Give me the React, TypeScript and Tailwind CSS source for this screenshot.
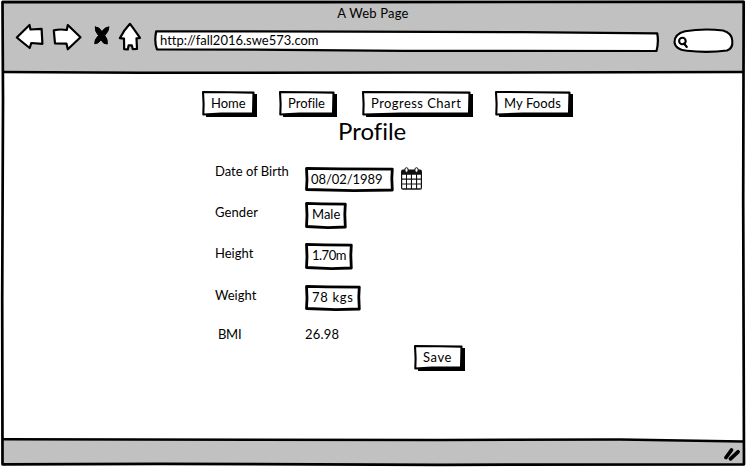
import type { ReactNode } from "react";

type BoxProps = { children: ReactNode; width: number; height: number; className: string; raised?: boolean };

function SketchBox({ children, width: w, height: h, className, raised }: BoxProps) {
  return (
    <div className={`relative shrink-0 whitespace-nowrap ${className}`}>
      <svg className="absolute inset-0 overflow-visible" width={w} height={h} aria-hidden="true">
        {raised ? (
          <>
            <path d={`M4 3H${w}V${h}H4Z`} fill="#000" />
            <path
              d={`M1 1 L${w * 0.5} 1.2 L${w - 3.5} 1.6 L${w - 4} ${h - 3.5} L${w * 0.35} ${h - 3.5} L1.3 ${h - 2.5} L1.6 ${h * 0.5} Z`}
              fill="#fff"
              stroke="#000"
              strokeWidth="2.1"
              strokeLinejoin="round"
            />
          </>
        ) : (
          <path
            d={`M1.5 1.3 L${w * 0.4} 1.8 L${w - 1.7} 2.2 L${w - 2.2} ${h * 0.45} L${w - 1.7} ${h - 2} L${w * 0.55} ${h - 1.4} L1.5 ${h - 2.5} L2 ${h * 0.5} Z`}
            fill="#fff"
            stroke="#000"
            strokeWidth="2.8"
            strokeLinejoin="round"
          />
        )}
      </svg>
      <span className="relative">{children}</span>
    </div>
  );
}

function NavIcons() {
  return (
    <svg
      className="shrink-0"
      width="128"
      height="30"
      viewBox="15 22 128 30"
      fill="#fff"
      stroke="#000"
      strokeWidth="2.2"
      strokeLinejoin="round"
      strokeLinecap="round"
      aria-hidden="true"
    >
      <path d="M16.8 37.5 L29.5 25 L30.5 29.5 L41.6 28.8 L42.4 43.8 L31.3 43 L29.7 48 Q24 43.5 16.8 37.5Z" />
      <path d="M53.8 30.4 Q60 28.8 66.8 30 L67.8 25 L80.5 37.3 L67.8 49.3 L66.5 43.7 L55 43.3 Z" />
      <path
        d="M95.3 27 Q99 26.5 101.9 31.5 Q104.5 27.3 109 26.8 Q109 31 104.8 35.5 Q108 39.5 107.3 44 Q103.3 44.5 101 39.8 Q98.5 43.8 94.8 43.8 Q94 40 98.5 35.5 Q94.5 31 95.3 27Z"
        fill="#000"
        strokeWidth="1"
      />
      <path d="M130 23.8 Q134 29 140 37.8 L136.5 38.4 L137 49 L132.8 49.2 L131.8 45.3 L128.6 45.4 L127.8 49.5 L124.2 49.2 L124 38.7 L119.8 38.2 Q124 30 130 23.8Z" />
    </svg>
  );
}

function BrowserHeader() {
  return (
    <header className="mx-[2px] h-[73px] shrink-0 bg-[#c1c1c1]">
      <h1 className="h-[22px] pt-[5px] text-center text-[13px] leading-4 tracking-[0.2px]">A Web Page</h1>
      <div className="flex items-start pl-[13px]">
        <NavIcons />
        <div className="relative mt-[8px] ml-[10px] h-[22px] w-[508px] shrink-0 pt-[2px] pl-[7px] text-[13px] leading-4">
          <svg className="absolute inset-0 overflow-visible" width="508" height="22" aria-hidden="true">
            <path
              d="M3.2 1.3 L200 1.6 L370 2.2 L504.2 3.3 Q505.9 12 503.5 21 L250 20.8 L130 19.8 L4 19.3 Q1 12 3.2 1.3Z"
              fill="#fff"
              stroke="#000"
              strokeWidth="2.2"
              strokeLinejoin="round"
            />
          </svg>
          <span className="relative">http://fall2016.swe573.com</span>
        </div>
        <svg
          className="mt-[5px] ml-[12px] shrink-0"
          width="62"
          height="28"
          viewBox="673 27 62 28"
          fill="#fff"
          stroke="#000"
          strokeWidth="2.1"
          strokeLinecap="round"
          aria-hidden="true"
        >
          <path d="M685 31.2 Q704 28.2 723 30.5 Q732 33 732.3 41 Q733 48.5 727 50.5 Q708 53 687 50.8 Q675 49.5 674.5 42 Q674.5 34 685 31.2Z" />
          <circle cx="682.4" cy="41" r="3.3" />
          <path d="M684 43.5 L686.8 47" />
        </svg>
      </div>
    </header>
  );
}

function CalendarIcon() {
  return (
    <svg className="ml-[6px] shrink-0" width="23" height="23" viewBox="0 0 23 23" aria-hidden="true">
      <rect x="1" y="2.5" width="21" height="20.3" rx="2" fill="#111" />
      <path
        d="M2.2 7.8h3.8v3.8H2.2zM7 7.8h3.9v3.8H7zM12 7.8h4v3.8h-4zM17.1 7.8h3.7v3.8h-3.7zM2.2 12.7h3.8v3.7H2.2zM7 12.7h3.9v3.7H7zM12 12.7h4v3.7h-4zM17.1 12.7h3.7v3.7h-3.7zM2.2 17.5h3.8v3.7H2.2zM7 17.5h3.9v3.7H7zM12 17.5h4v3.7h-4zM17.1 17.5h3.7v3.7h-3.7z"
        fill="#fff"
      />
      <rect x="5" y="0.7" width="3" height="4.6" rx="1.5" fill="#fff" stroke="#111" />
      <rect x="15" y="0.7" width="3" height="4.6" rx="1.5" fill="#fff" stroke="#111" />
    </svg>
  );
}

function WindowFrame() {
  return (
    <svg
      className="pointer-events-none absolute inset-0"
      width="746"
      height="467"
      fill="none"
      stroke="#000"
      strokeWidth="2.7"
      strokeLinejoin="round"
      aria-hidden="true"
    >
      <path d="M2.5 2 L320 2.2 L743.7 1.8 L743.2 200 L744 464.3 L440 464.8 L160 463.8 L2.5 464.3 L2.2 300 L3 100 Z" />
      <path d="M3 72 L140 72.8 L420 72.5 L743 72.1" strokeWidth="2.5" />
      <path d="M3 439.2 L440 440 L620 439.4 L743 441.6" strokeWidth="2.5" />
    </svg>
  );
}

export default function App() {
  return (
    <div className="relative flex h-[467px] w-[746px] flex-col overflow-hidden bg-white font-['Lato',sans-serif] text-[13px] leading-4 text-black [font-variant-ligatures:none]">
      <BrowserHeader />
      <main className="flex-1 pt-[18px]">
        <nav className="flex gap-[22px] pl-[202px]">
          <SketchBox width={55} height={26} raised className="h-[26px] w-[55px] pt-[4px] pl-[9px]">Home</SketchBox>
          <SketchBox width={58} height={26} raised className="h-[26px] w-[58px] pt-[4px] pl-[9px]">Profile</SketchBox>
          <SketchBox width={111} height={26} raised className="ml-[3px] h-[26px] w-[111px] pt-[4px] pl-[9px] tracking-[0.45px]">Progress Chart</SketchBox>
          <SketchBox width={78} height={26} raised className="h-[26px] w-[78px] pt-[4px] pl-[9px] tracking-[0.1px]">My Foods</SketchBox>
        </nav>
        <h2 className="-mt-px mb-px pl-[338px] text-[24px] leading-[30px]">Profile</h2>
        <div className="pl-[215px]">
          <div className="flex h-[36px] pt-[20px]">
            <span className="-mt-[4px] w-[90px] shrink-0">Date of Birth</span>
            <SketchBox width={89} height={25} className="h-[25px] w-[89px] pt-[4px] pl-[6px] tracking-[-0.05px]">08/02/1989</SketchBox>
            <CalendarIcon />
          </div>
          <div className="flex h-[41px] pt-[19px]">
            <span className="w-[90px] shrink-0 pt-[2px] tracking-[0.1px]">Gender</span>
            <SketchBox width={42} height={27} className="h-[27px] w-[42px] pt-[4px] pl-[7px]">Male</SketchBox>
          </div>
          <div className="flex h-[42px] pt-[19px]">
            <span className="w-[90px] shrink-0 pt-[2px]">Height</span>
            <SketchBox width={48} height={27} className="h-[27px] w-[48px] pt-[4px] pl-[7px] tracking-[-0.5px]">1.70m</SketchBox>
          </div>
          <div className="flex h-[43px] pt-[19px]">
            <span className="w-[90px] shrink-0 pt-[2px]">Weight</span>
            <SketchBox width={56} height={26} className="h-[26px] w-[56px] pt-[4px] pl-[7px] tracking-[0.7px]">78 kgs</SketchBox>
          </div>
          <div className="flex h-[36px] pt-[17px]">
            <span className="w-[90px] shrink-0 pl-[3px] tracking-[-0.3px]">BMI</span>
            <span className="tracking-[0.2px]">26.98</span>
          </div>
          <SketchBox width={51} height={26} raised className="ml-[199px] h-[26px] w-[51px] pt-[4px] pl-[9px] tracking-[0.6px]">Save</SketchBox>
        </div>
      </main>
      <footer className="h-[28px] shrink-0">
        <svg width="746" height="28" aria-hidden="true">
          <path d="M3 0 L620 0.5 L743 2.5 V25 H3Z" fill="#c1c1c1" />
          <path d="M726 18.5 L731.5 11 M730.5 19.8 L738 12.8" stroke="#000" strokeWidth="3.8" strokeLinecap="round" />
        </svg>
      </footer>
      <WindowFrame />
    </div>
  );
}
